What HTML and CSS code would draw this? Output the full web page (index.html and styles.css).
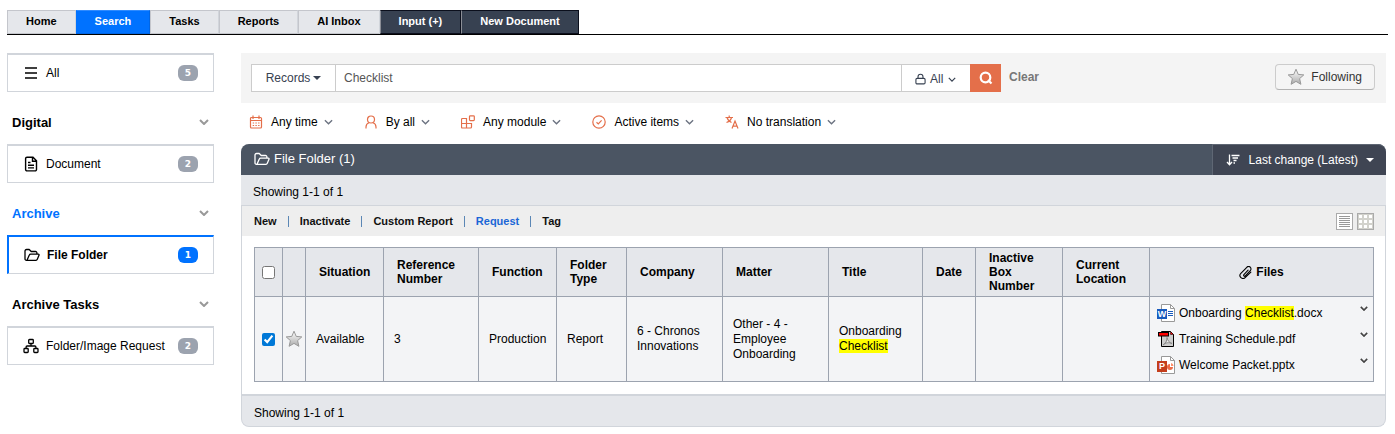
FILE: index.html
```html
<!DOCTYPE html>
<html lang="en">
<head>
    <meta charset="UTF-8">
    <meta name="viewport" content="width=device-width, initial-scale=1.0">
    <title>Search - File Folder</title>
    <link rel="stylesheet" href="styles.css">
</head>
<body>
    <!-- shared icons -->
    <svg class="sprite" aria-hidden="true">
        <symbol id="chevron" viewBox="0 0 10 6"><path d="M1 1l4 4 4-4" fill="none" stroke="currentColor" stroke-width="1.5"/></symbol>
        <symbol id="chevron-bold" viewBox="0 0 10 6"><path d="M1 1l4 4 4-4" fill="none" stroke="currentColor" stroke-width="2"/></symbol>
        <symbol id="folder" viewBox="0 0 16 14"><path d="M3 12.3H2.4A1.4 1.4 0 0 1 1 10.900V3a1.500 1.500 0 0 1 1.500-1.500h2.700L7.200 3.500h4.300A1.400 1.400 0 0 1 12.900 4.900V6M3 12.300L5.300 7a1.400 1.400 0 0 1 1.300-.9h7.700a.8.8 0 0 1 .7 1.100l-1.800 4.200a1.300 1.300 0 0 1-1.200.9z" fill="none" stroke="currentColor" stroke-width="1.300" stroke-linejoin="round"/></symbol>
        <symbol id="star" viewBox="0 0 18 18">
            <linearGradient id="star-fill" x1="0" y1="0" x2="0" y2="1"><stop offset="0" stop-color="#fff"/><stop offset="1" stop-color="#aaa"/></linearGradient>
            <path d="M9 1.200l2.200 5.200 5.600.5-4.200 3.700 1.300 5.700L9 13.400l-4.900 2.900 1.300-5.700L1.200 6.900l5.600-.5z" fill="url(#star-fill)" stroke="#999" stroke-linejoin="round"/>
        </symbol>
    </svg>

    <nav class="tabs">
        <a href="#">Home</a>
        <a href="#" class="active">Search</a>
        <a href="#">Tasks</a>
        <a href="#">Reports</a>
        <a href="#">AI Inbox</a>
        <a href="#" class="dark">Input (+)</a>
        <a href="#" class="dark">New Document</a>
    </nav>

    <div class="container">
        <aside class="sidebar">
            <a href="#" class="side-item">
                <svg class="side-icon" viewBox="0 0 16 16"><path d="M2 3h12M2 8h12M2 13h12" stroke="currentColor" stroke-width="1.400"/></svg>
                <span>All</span><span class="badge">5</span>
            </a>

            <h2><button type="button">Digital <svg class="fold"><use href="#chevron-bold"/></svg></button></h2>
            <a href="#" class="side-item">
                <svg class="side-icon" viewBox="0 0 16 16" fill="none" stroke="currentColor" stroke-width="1.400"><path d="M4 1.200h6L13.500 4.700v8.800a1.400 1.400 0 0 1-1.400 1.400H4A1.400 1.400 0 0 1 2.600 13.500V2.600A1.400 1.400 0 0 1 4 1.200zM9.500 1.500v3.700h4M5 6.500h2.500M5 9.200h6M5 11.900h6"/></svg>
                <span>Document</span><span class="badge">2</span>
            </a>

            <h2 class="current"><button type="button">Archive <svg class="fold"><use href="#chevron-bold"/></svg></button></h2>
            <a href="#" class="side-item selected">
                <svg class="side-icon"><use href="#folder"/></svg>
                <span>File Folder</span><span class="badge">1</span>
            </a>

            <h2><button type="button">Archive Tasks <svg class="fold"><use href="#chevron-bold"/></svg></button></h2>
            <a href="#" class="side-item">
                <svg class="side-icon" viewBox="0 0 16 16" fill="none" stroke="currentColor" stroke-width="1.300"><rect x="5.700" y="1.500" width="4.600" height="4" rx=".8"/><rect x="1" y="10.500" width="4.200" height="4" rx=".8"/><rect x="10.800" y="10.500" width="4.200" height="4" rx=".8"/><path d="M8 5.500V8M3.100 10.500V9a1 1 0 0 1 1-1h7.800a1 1 0 0 1 1 1v1.500"/></svg>
                <span>Folder/Image Request</span><span class="badge">2</span>
            </a>
        </aside>

        <main>
            <form class="search-bar" onsubmit="return false">
                <div class="search-group">
                    <button type="button" class="search-type">Records <span class="caret"></span></button>
                    <input type="text" class="search-input" value="Checklist" aria-label="Search text">
                    <button type="button" class="search-lock">
                        <svg class="lock" viewBox="0 0 12 12" fill="none" stroke="currentColor" stroke-width="1.200"><rect x="1" y="5.300" width="10" height="6" rx="1.300"/><path d="M3.300 5.300V3.500a2.700 2.700 0 0 1 5.400 0v1.800"/></svg>
                        All
                        <svg class="mini-chevron"><use href="#chevron"/></svg>
                    </button>
                    <button type="submit" class="search-submit" aria-label="Search">
                        <svg viewBox="0 0 14 14" fill="none" stroke="#fff" stroke-width="2.200"><circle cx="6.500" cy="6.500" r="4.800"/><path d="M9 9l3.500 3.500"/></svg>
                    </button>
                </div>
                <a href="#" class="clear">Clear</a>
                <button type="button" class="following"><svg class="star"><use href="#star"/></svg>Following</button>
            </form>

            <div class="filters">
                <button type="button">
                    <svg class="filter-icon" viewBox="0 0 14 14"><rect x="1.500" y="2.500" width="11" height="10.500" rx="1"/><path d="M1.500 5.500h11M4 .5v3.500M10 .5v3.500"/><path d="M3.700 8h7M3.700 10.500h7" stroke-dasharray="1.400 1.300"/></svg>
                    Any time <svg class="chevron"><use href="#chevron"/></svg>
                </button>
                <button type="button">
                    <svg class="filter-icon" viewBox="0 0 14 14"><circle cx="7" cy="4.500" r="3.500"/><path d="M2 13.500V12a4.500 4.500 0 0 1 3-4.200M12 13.500V12A4.500 4.500 0 0 0 9 7.800"/></svg>
                    By all <svg class="chevron"><use href="#chevron"/></svg>
                </button>
                <button type="button">
                    <svg class="filter-icon" viewBox="0 0 14 14"><path d="M5.500 8.500V3.500H1.500a1 1 0 0 0-1 1V12a1 1 0 0 0 1 1H9.500a1 1 0 0 0 1-1V8.500H.5M5.500 8.500V13"/><rect x="8.500" y=".8" width="4.800" height="4.800" rx=".8"/></svg>
                    Any module <svg class="chevron"><use href="#chevron"/></svg>
                </button>
                <button type="button">
                    <svg class="filter-icon" viewBox="0 0 14 14"><circle cx="7" cy="7" r="6.200"/><path d="M4.500 7.200l1.800 1.700 3.300-3.500"/></svg>
                    Active items <svg class="chevron"><use href="#chevron"/></svg>
                </button>
                <button type="button">
                    <svg class="filter-icon" viewBox="0 0 14 14"><path d="M.5 2.500h7.500M4.200.5v2M1.500 7.500C4 6.500 6 4.800 6.500 2.500M2 2.500c.5 2 2.500 4 4.500 5M7 13.500l3-7.500 3 7.500M8 11.200h4"/></svg>
                    No translation <svg class="chevron"><use href="#chevron"/></svg>
                </button>
            </div>

            <section class="panel">
                <header class="panel-header">
                    <h1><svg class="title-icon"><use href="#folder"/></svg>File Folder (1)</h1>
                    <button type="button" class="sort">
                        <svg class="sort-icon" viewBox="0 0 14 12" fill="none" stroke="currentColor" stroke-width="1.300"><path d="M3.500.5v10M1 8l2.500 2.700L6 8M5.500 1.500h8M6.500 4h5.500M7.500 6.500h3M7.500 9h1.500"/></svg>
                        Last change (Latest)
                        <span class="caret"></span>
                    </button>
                </header>
                <div class="count">Showing 1-1 of 1</div>

                <div class="panel-body">
                    <div class="toolbar">
                        <a href="#">New</a><i></i>
                        <a href="#">Inactivate</a><i></i>
                        <a href="#">Custom Report</a><i></i>
                        <a href="#" class="current">Request</a><i></i>
                        <a href="#">Tag</a>
                        <div class="views">
                            <button type="button" aria-label="List view"><svg viewBox="0 0 17 17"><rect x=".5" y=".5" width="16" height="16" fill="#fff" stroke="#aaa"/><path d="M3 3.500h11M3 5.500h11M3 7.500h11M3 9.500h11M3 11.500h11M3 13.500h11" stroke="#999"/></svg></button>
                            <button type="button" aria-label="Grid view"><svg viewBox="0 0 17 17"><rect x=".5" y=".5" width="16" height="16" fill="#d2d2cc" stroke="#aaa"/><path d="M2 3.500h13M2 8.500h13M2 13.500h13" stroke="#fff" stroke-width="3" stroke-dasharray="3 2"/></svg></button>
                        </div>
                    </div>

                    <table>
                        <colgroup>
                            <col class="w-check"><col class="w-star"><col class="w-situation"><col class="w-reference">
                            <col class="w-function"><col class="w-type"><col class="w-company"><col class="w-matter">
                            <col class="w-title"><col class="w-date"><col class="w-box"><col class="w-box"><col>
                        </colgroup>
                        <thead>
                            <tr>
                                <th class="icon-cell"><input type="checkbox" aria-label="Select all"></th>
                                <th></th>
                                <th>Situation</th>
                                <th>Reference Number</th>
                                <th>Function</th>
                                <th>Folder Type</th>
                                <th>Company</th>
                                <th>Matter</th>
                                <th>Title</th>
                                <th>Date</th>
                                <th>Inactive Box Number</th>
                                <th>Current Location</th>
                                <th class="files-head"><svg class="clip" viewBox="0 0 14 14" fill="none" stroke="currentColor" stroke-width="1.200"><path d="M9.800 4.500L5.300 9.300a1 1 0 0 0 1.500 1.400l5.400-5.700a2.600 2.600 0 0 0-3.800-3.600L2 8a3.200 3.200 0 0 0 4.600 4.500L12.800 6.500" stroke-linecap="round"/></svg>Files</th>
                            </tr>
                        </thead>
                        <tbody>
                            <tr>
                                <td class="icon-cell"><input type="checkbox" aria-label="Select record 3" checked></td>
                                <td class="icon-cell"><svg class="star"><use href="#star"/></svg></td>
                                <td>Available</td>
                                <td>3</td>
                                <td>Production</td>
                                <td>Report</td>
                                <td>6 - Chronos Innovations</td>
                                <td>Other - 4 - Employee Onboarding</td>
                                <td>Onboarding <mark>Checklist</mark></td>
                                <td></td>
                                <td></td>
                                <td></td>
                                <td class="files">
                                    <div class="file">
                                        <svg class="file-icon" viewBox="0 0 18 18"><path d="M4.500.5h9l4 4v13h-13z" fill="#fff" stroke="#999"/><path d="M13.500.5v4h4" fill="none" stroke="#999"/><path d="M11 7.500h5M11 9.500h5M11 11.500h5" stroke="#185abd"/><rect y="5" width="10" height="10" fill="#185abd"/><text x="5" y="13" class="glyph">W</text></svg>
                                        <a href="#">Onboarding <mark>Checklist</mark>.docx</a>
                                        <button type="button" aria-label="File menu"><svg><use href="#chevron-bold"/></svg></button>
                                    </div>
                                    <div class="file">
                                        <svg class="file-icon" viewBox="0 0 18 18"><path d="M4.500 1.500h9l3 3v12h-12z" fill="#ccc" stroke="#000"/><path d="M13.500 1.500v3h3z" fill="#f00" stroke="#000" stroke-width=".5"/><path d="M10 7.500c.2 3.500-1.500 6-4 7.500 2-2.300 6-3 9-1.500-2.500-.5-4.500-3-5-6z" fill="#eee" stroke="#888" stroke-width="1"/><rect x="1.500" y="2.500" width="10" height="3.500" fill="#f00" stroke="#000"/></svg>
                                        <a href="#">Training Schedule.pdf</a>
                                        <button type="button" aria-label="File menu"><svg><use href="#chevron-bold"/></svg></button>
                                    </div>
                                    <div class="file">
                                        <svg class="file-icon" viewBox="0 0 18 18"><path d="M4.500.5h9l4 4v13h-13z" fill="#fff" stroke="#999"/><path d="M13.500.5v4h4" fill="none" stroke="#999"/><path d="M13 8v3h3a3 3 0 1 1-3-3z" fill="#ed6c47"/><path d="M14 7a3 3 0 0 1 2.500 3H14z" fill="#ff8f6b"/><rect y="5" width="10" height="11" fill="#c43e1c"/><text x="5" y="13" class="glyph">P</text></svg>
                                        <a href="#">Welcome Packet.pptx</a>
                                        <button type="button" aria-label="File menu"><svg><use href="#chevron-bold"/></svg></button>
                                    </div>
                                </td>
                            </tr>
                        </tbody>
                    </table>
                </div>
                <footer class="panel-footer">Showing 1-1 of 1</footer>
            </section>
        </main>
    </div>
</body>
</html>
```
FILE: styles.css
```css
* {
    box-sizing: border-box;
}
body {
    margin: 10px 7px 7px;
    font-family: "Liberation Sans", Arial, sans-serif;
    font-size: 12px;
    line-height: 15px;
    color: #000;
    background: #fff;
}
a {
    color: inherit;
    text-decoration: none;
}
button {
    font: inherit;
    color: inherit;
    background: none;
    border: none;
    padding: 0;
    cursor: pointer;
}
svg {
    display: block;
    flex: none;
}
.sprite {
    position: absolute;
    width: 0;
    height: 0;
}
mark {
    background: #ff0;
}
.caret {
    border: 4px solid transparent;
    border-top-color: currentColor;
    border-bottom: none;
}

/* top tabs */
.tabs {
    display: flex;
    border-bottom: 1px solid #000;
}
.tabs a {
    height: 24px;
    padding: 0 18px;
    border: 1px solid #c4c6cc;
    border-right-color: #d1d5db;
    background: #e5e7eb;
    font-size: 11px;
    font-weight: bold;
    line-height: 21px;
}
.tabs .active {
    background: #0072ff;
    border-color: #2f8bff #0066e6 #0066e6 #0072ff;
    color: #fff;
}
.tabs .dark {
    background: #374151;
    border-color: #0b0f1c #0b0f1c #0b0f1c #8b8e96;
    color: #fff;
}

.container {
    display: flex;
    gap: 27px;
    margin-top: 18px;
    padding-right: 2px;
}

/* sidebar */
.sidebar {
    width: 207px;
    flex: none;
}
.side-item {
    display: flex;
    align-items: center;
    height: 39px;
    padding: 0 15px;
    border: 1px solid #d1d5db;
    border-top-width: 2px;
}
.side-icon {
    width: 16px;
    height: 16px;
    margin-right: 7px;
}
.badge {
    width: 20px;
    margin-left: auto;
    border-radius: 6px;
    background: #9ca3af;
    color: #fff;
    font: bold 9px/16px "DejaVu Sans", sans-serif;
    text-align: center;
}
.side-item.selected {
    border-top-color: #0072ff;
    border-left: 2px solid #0072ff;
    font-weight: bold;
}
.selected .badge {
    background: #0072ff;
}
.sidebar h2 {
    margin: 0;
    font-size: 13px;
}
.sidebar h2 button {
    display: flex;
    align-items: center;
    justify-content: space-between;
    width: 100%;
    height: 52px;
    padding: 8px 5px 0;
}
.sidebar h2.current {
    color: #0072ff;
}
.sidebar .fold {
    width: 10px;
    height: 6px;
    color: #999;
}

main {
    flex: 1;
    min-width: 0;
}

/* search */
.search-bar {
    display: flex;
    align-items: flex-start;
    padding: 11px 11px 11px 10px;
    background: #f4f4f4;
}
.search-group {
    display: flex;
    flex: 0 1 750px;
    height: 28px;
    color: #374151;
}
.search-type,
.search-input,
.search-lock {
    border: 1px solid #ccc;
    background: #fff;
}
.search-type {
    display: flex;
    align-items: center;
    justify-content: center;
    gap: 3px;
    width: 85px;
}
.search-input {
    flex: 1;
    min-width: 0;
    padding: 0 8px;
    border-left: none;
    font: inherit;
    color: #555;
}
.search-lock {
    display: flex;
    align-items: center;
    gap: 4px;
    width: 68px;
    padding: 2px 0 0 13px;
    border-left: none;
    border-right: none;
}
.lock {
    width: 11px;
    height: 12px;
}
.mini-chevron {
    width: 8px;
    height: 5px;
    margin-left: 1px;
}
.search-submit {
    width: 31px;
    background: #e46f4a;
}
.search-submit svg {
    width: 14px;
    height: 14px;
    margin: 0 auto;
}
.clear {
    margin: 6px 0 0 8px;
    color: #777;
    font-weight: bold;
}
.following {
    display: flex;
    align-items: center;
    gap: 6px;
    height: 26px;
    margin-left: auto;
    padding: 0 12px 0 11px;
    border: 1px solid #ccc;
    border-bottom-color: #b3b3b3;
    border-radius: 4px;
    background: #f5f5f5;
    color: #333;
}
.star {
    width: 18px;
    height: 18px;
}

.filters {
    display: flex;
    gap: 31px;
    height: 41px;
    padding: 0 8px 3px;
}
.filters button {
    display: flex;
    align-items: center;
}
.filter-icon {
    width: 14px;
    height: 14px;
    margin-right: 8px;
    fill: none;
    stroke: #e46f4a;
    stroke-width: 1.2;
}
.chevron {
    width: 9px;
    height: 6px;
    margin-left: 6px;
    color: #6b7280;
}

/* results */
.panel {
    border-radius: 8px;
    background: #e5e7eb;
    overflow: hidden;
}
.panel-header {
    display: flex;
    justify-content: space-between;
    height: 31px;
    background: #4b5563;
    color: #fff;
}
.panel-header h1 {
    display: flex;
    align-items: center;
    gap: 4px;
    margin: 0;
    padding: 0 0 2px 13px;
    font-size: 13px;
    font-weight: normal;
}
.title-icon {
    width: 16px;
    height: 14px;
}
.sort {
    display: flex;
    align-items: center;
    padding: 0 12px 0 13px;
    border: 1px solid #5f6774;
    border-width: 1px 0 0 1px;
    border-top-right-radius: 8px;
    background: #3f4553;
}
.sort-icon {
    width: 14px;
    height: 12px;
    margin-right: 9px;
}
.sort .caret {
    margin-left: 8px;
}
.count {
    height: 30px;
    padding: 10px 12px 0;
}
.panel-body {
    border: 1px solid #d1d5db;
    border-bottom-width: 2px;
    background: #fff;
}
.toolbar {
    display: flex;
    align-items: center;
    height: 30px;
    padding: 0 11px 0 12px;
    background: #eee;
    color: #111;
    font-size: 11px;
    font-weight: bold;
}
.toolbar i {
    width: 1px;
    height: 11px;
    margin: 0 11px;
    background: #5b87b5;
}
.toolbar .current {
    color: #1a66d6;
}
.views {
    display: flex;
    gap: 4px;
    margin-left: auto;
}
.views svg {
    width: 17px;
    height: 17px;
}

table {
    width: calc(100% - 23px);
    margin: 11px 11px 12px 12px;
    border-collapse: collapse;
    table-layout: fixed;
}
th,
td {
    border: 1px solid #9ca3af;
    text-align: left;
}
th {
    height: 49px;
    padding: 0 13px;
    background: #e5e7eb;
    line-height: 14px;
}
td {
    height: 85px;
    padding: 0 10px;
    background: #f3f4f6;
}
.icon-cell {
    padding: 0;
    text-align: center;
}
.icon-cell input {
    display: block;
    width: 13px;
    height: 13px;
    margin: 0 auto;
    accent-color: #0078d7;
}
.icon-cell .star {
    margin: 0 auto;
}
.files-head {
    text-align: center;
}
.clip {
    display: inline-block;
    width: 13px;
    height: 13px;
    margin-right: 4px;
    vertical-align: middle;
}
.w-check { width: 28px; }
.w-star { width: 23px; }
.w-situation { width: 78px; }
.w-reference { width: 95px; }
.w-function { width: 78px; }
.w-type { width: 70px; }
.w-company { width: 96px; }
.w-matter { width: 106px; }
.w-title { width: 94px; }
.w-date { width: 53px; }
.w-box { width: 87px; }

.files {
    padding: 0 5px 0 7px;
}
.file {
    display: flex;
    align-items: center;
    height: 26px;
}
.file-icon {
    width: 18px;
    height: 18px;
    margin-right: 4px;
}
.file-icon .glyph {
    fill: #fff;
    font: bold 9px "Liberation Sans", Arial, sans-serif;
    text-anchor: middle;
}
.file button {
    align-self: flex-start;
    margin: 6px 0 0 auto;
    color: #444;
}
.file button svg {
    width: 8px;
    height: 5px;
}
.panel-footer {
    height: 31px;
    padding: 10px 12px 0;
    border: 1px solid #d1d5db;
    border-top: none;
    border-radius: 0 0 8px 8px;
}
```
